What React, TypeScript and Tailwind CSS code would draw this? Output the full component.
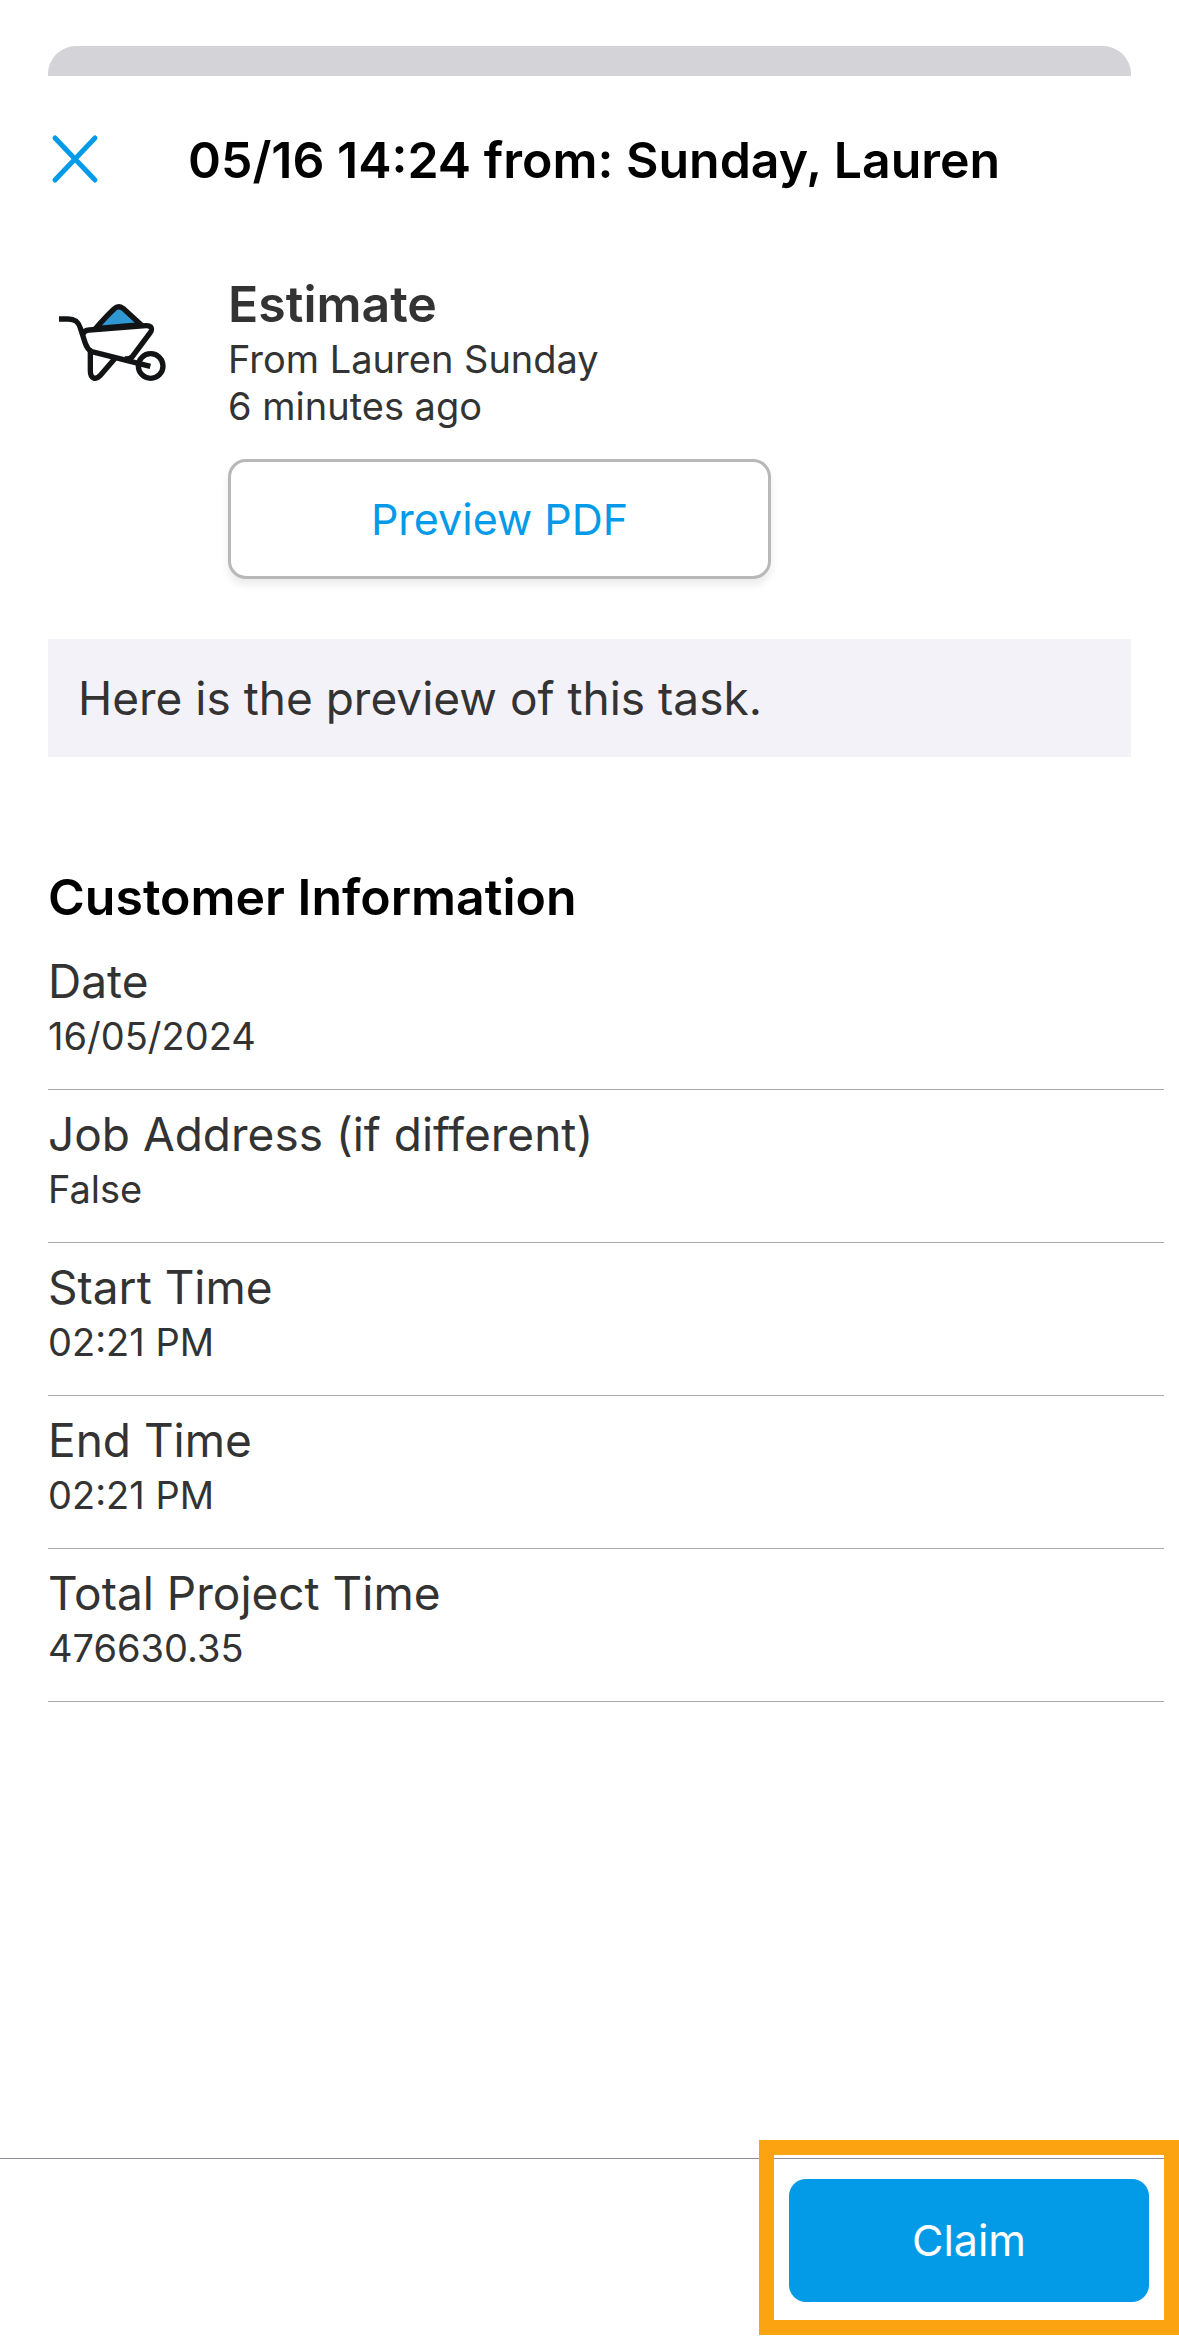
const details = [
  { label: "Date", value: "16/05/2024" },
  { label: "Job Address (if different)", value: "False" },
  { label: "Start Time", value: "02:21 PM" },
  { label: "End Time", value: "02:21 PM" },
  { label: "Total Project Time", value: "476630.35" },
];

function CloseIcon() {
  return (
    <svg width="54" height="54" viewBox="0 0 54 54" fill="none" stroke="#039be8" strokeWidth="5" strokeLinecap="round" aria-hidden="true">
      <path d="M7 5 47 47M47 5 7 47" />
    </svg>
  );
}

function WheelbarrowIcon() {
  return (
    <svg className="h-[140px] w-[180px] shrink-0" viewBox="0 0 540 420" fill="none" stroke="#111314" strokeWidth="16" strokeLinejoin="round" aria-hidden="true">
      <path d="M166 176C182 158 204 134 222 117Q235 105 249 115L303 164Z" fill="#2f98d3" />
      <path d="M57 147H84C108 147 116 158 121 174L136 220Q141 237 155 245L331 289" />
      <path d="M128 194Q132 181 148 180L318 167Q337 166 334 181Q333 185 329 190L277 260Q269 268 254 267" />
      <path d="M151 243V302C151 324 166 332 180 317L224 266" />
      <circle cx="332" cy="288" r="37" />
    </svg>
  );
}

export default function App() {
  return (
    <div className="flex min-h-screen flex-col bg-white font-['Inter',sans-serif] text-[#333333]">
      <div className="mx-12 mt-[46px] h-[30px] rounded-t-[28px] bg-[#d4d3d8]" />

      <header className="flex items-center px-12 pt-[52px] text-black">
        <button type="button" aria-label="Close" className="shrink-0">
          <CloseIcon />
        </button>
        <h1 className="ml-[86px] text-[50px] leading-[64px] font-semibold whitespace-nowrap">05/16 14:24 from: Sunday, Lauren</h1>
      </header>

      <main className="flex flex-col">
        <section className="flex items-start pt-[78px] pl-10">
          <WheelbarrowIcon />
          <div className="ml-2 w-[543px] pt-0.5">
            <h2 className="text-[50px] leading-[64px] font-semibold">Estimate</h2>
            <p className="text-[38px] leading-[47px]">From Lauren Sunday</p>
            <p className="text-[38px] leading-[47px]">6 minutes ago</p>
            <button type="button" className="mt-[29px] h-[120px] w-full rounded-[18px] border-3 border-[#b8b8b8] bg-white text-[43px] text-[#039be8] shadow-[0_6px_8px_rgba(0,0,0,0.08)]">
              Preview PDF
            </button>
          </div>
        </section>

        <p className="mx-12 mt-[60px] bg-[#f3f2f8] px-[30px] py-[27px] text-[46px] leading-[64px]">Here is the preview of this task.</p>

        <section className="mt-[108px] pr-[15px] pl-12">
          <h2 className="text-[50px] leading-[64px] font-semibold text-black">Customer Information</h2>
          <dl className="mt-2">
            {details.map((item) => (
              <div key={item.label} className="h-[153px] border-b border-[#a9a9a9] pt-3">
                <dt className="text-[46px] leading-[64px]">{item.label}</dt>
                <dd className="text-[38px] leading-[47px]">{item.value}</dd>
              </div>
            ))}
          </dl>
        </section>
      </main>

      <footer className="mt-auto flex justify-end border-t border-[#8e8d93] px-[30px] pt-5 pb-12">
        <div className="relative">
          <button type="button" className="h-[123px] w-[360px] rounded-[17px] bg-[#039be8] text-[43px] text-white">
            Claim
          </button>
          <span className="pointer-events-none absolute -inset-x-[30px] -top-[39px] -bottom-[33px] border-15 border-[#fca311]" />
        </div>
      </footer>
    </div>
  );
}
